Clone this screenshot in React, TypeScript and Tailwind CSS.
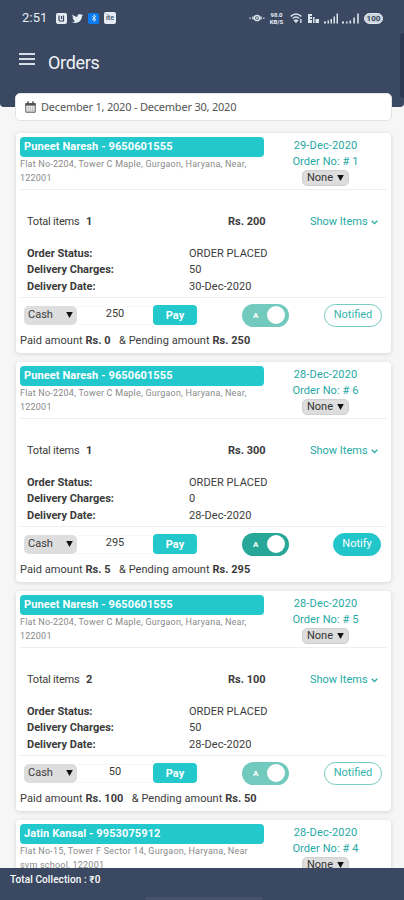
import { FaBluetoothB, FaTwitter } from "react-icons/fa";

const orders = [
  {
    id: 1,
    customer: "Puneet Naresh - 9650601555",
    address: ["Flat No-2204, Tower C Maple, Gurgaon, Haryana, Near,", "122001"],
    date: "29-Dec-2020",
    details: {
      items: 1,
      total: 200,
      charges: 50,
      delivery: "30-Dec-2020",
      due: 250,
      paid: 0,
      notified: true,
    },
  },
  {
    id: 6,
    customer: "Puneet Naresh - 9650601555",
    address: ["Flat No-2204, Tower C Maple, Gurgaon, Haryana, Near,", "122001"],
    date: "28-Dec-2020",
    details: {
      items: 1,
      total: 300,
      charges: 0,
      delivery: "28-Dec-2020",
      due: 295,
      paid: 5,
      notified: false,
    },
  },
  {
    id: 5,
    customer: "Puneet Naresh - 9650601555",
    address: ["Flat No-2204, Tower C Maple, Gurgaon, Haryana, Near,", "122001"],
    date: "28-Dec-2020",
    details: {
      items: 2,
      total: 100,
      charges: 50,
      delivery: "28-Dec-2020",
      due: 50,
      paid: 100,
      notified: true,
    },
  },
  {
    id: 4,
    customer: "Jatin Kansal - 9953075912",
    address: ["Flat No-15, Tower F Sector 14, Gurgaon, Haryana, Near", "svm school, 122001"],
    date: "28-Dec-2020",
    details: null,
  },
];

type Order = (typeof orders)[number];
type Details = NonNullable<Order["details"]>;

function StatusBar() {
  return (
    <div className="flex h-9 items-center pl-[22px] text-[#e6edf5]">
      <span className="w-[34px] text-[13px] tracking-[0.1px]">2:51</span>
      <span className="flex h-[11px] w-[11px] items-center justify-center rounded-[2px] bg-[#e4ebf2]">
        <svg width="9" height="9" viewBox="0 0 9 9" fill="none" stroke="#3a4861" strokeWidth="1.2">
          <path d="M2 1.5v4.2q0 1.3 1.3 1.3h3.2V1.5M4.5 2v3" />
        </svg>
      </span>
      <FaTwitter className="ml-[5px] h-[11px] w-[11px]" />
      <span className="ml-[5px] flex h-[11px] w-[11px] items-center justify-center rounded-[2px] bg-[#087cf0]">
        <FaBluetoothB size={8} />
      </span>
      <span className="ml-[5px] flex h-3 w-[12px] items-center justify-center rounded-[2px] bg-[#e4ebf2] text-[7px] leading-[9px] font-bold text-[#526078]">
        ite
      </span>
      <div className="ml-auto flex items-center pr-[21px]">
        <svg width="16" height="10" viewBox="0 0 16 10" fill="none" stroke="#dbe5ee" strokeWidth="1.5">
          <circle cx="8" cy="5" r="2.6" />
          <path d="M8 4v2M4 3.5v3M12 3.5v3M1.2 4.5v1.2M14.8 4.5v1.2" />
        </svg>
        <span className="ml-[3px] flex w-[17px] flex-col items-center text-[6px] leading-[7px] font-bold">
          <span>98.0</span>
          <span>KB/S</span>
        </span>
        {/* wifi */}
        <svg className="ml-[5px]" width="13" height="11" viewBox="0 0 13 11" fill="none" stroke="#dbe5ee" strokeWidth="1.4">
          <path d="M.7 3.4q5.3-4.6 10.6 0M2.7 5.5q3.3-2.8 6.6 0M4.5 7.5q1.5-1.2 3 0L6 9ZM10.8 6v4" />
        </svg>
        {/* volte */}
        <svg className="ml-[4px]" width="13" height="11" viewBox="0 0 13 11" fill="#dbe5ee">
          <path d="M1 1h4v2H3v1h2v2H3v1h2v3H1ZM6 4h1.5v6H6ZM8.5 6H12v4H8.5Z" />
        </svg>
        {/* sim 1 */}
        <svg className="ml-[4px]" width="15" height="11" viewBox="0 0 15 11" fill="#dbe5ee">
          <path d="M0 8.5h2v2H0ZM3.5 7.5H5v3H3.5ZM6.5 6H8v4.5H6.5ZM9.5 3.5H11v7H9.5ZM12.5.5H14v10h-1.5Z" />
        </svg>
        {/* sim 2 */}
        <svg className="ml-[3px]" width="18" height="11" viewBox="0 0 18 11" fill="#dbe5ee">
          <path d="M0 8.5h2v2H0ZM4 8.5h1.6v2H4ZM7.5 7.5h1.6v3H7.5ZM11.3 4.5h1.6v6h-1.6ZM15.2.5h1.6v10h-1.6Z" />
        </svg>
        <span className="ml-[4px] flex h-[11px] w-[19px] items-center justify-center rounded-full border border-[#e4ebf2] bg-[#cbd3dc] text-[8px] leading-[9px] font-bold text-[#3a4861]">
          100
        </span>
      </div>
    </div>
  );
}

function CalendarIcon() {
  return (
    <svg className="mr-[5px]" width="11" height="12" viewBox="0 0 11 12" fill="none" stroke="#555">
      <path d="M.8 2.5h9.4v8.7H.8Z" />
      <path d="M.5 3.5h10" strokeWidth="2.4" />
      <path d="M3 .3v2.5M8 .3v2.5" strokeWidth="1.5" />
      <path d="M1 7h9M1 9.2h9M3.6 5v6M5.6 5v6M7.7 5v6" stroke="#999" strokeWidth=".5" />
    </svg>
  );
}

function Caret() {
  return (
    <svg width="7" height="6" viewBox="0 0 7 6" fill="#111">
      <path d="M.2 0h6.6L3.5 6Z" />
    </svg>
  );
}

function Detail({ label, value }: { label: string; value: string | number }) {
  return (
    <div className="flex h-[16.3px] items-center">
      <span className="w-[169px] pl-[7px] font-bold">{label}</span>
      <span className="tracking-[0.05px]">{value}</span>
    </div>
  );
}

function OrderBody({ details }: { details: Details }) {
  return (
    <>
      <div className="flex h-[55px] items-center pt-[9px] pl-[7px]">
        <span className="w-[59px] tracking-[-0.2px]">Total items</span>
        <b className="w-[142px]">{details.items}</b>
        <b className="w-[82px]">Rs. {details.total}</b>
        <button className="flex items-center gap-[3px] whitespace-nowrap text-[#26aaa5]">
          Show Items
          <svg width="7" height="5" viewBox="0 0 7 5" fill="none" stroke="currentColor" strokeWidth="1.3">
            <path d="m.7.8 2.8 2.8L6.3.8" />
          </svg>
        </button>
      </div>

      <div className="h-[53px] border-b border-[#eeeeee] pt-px">
        <Detail label="Order Status:" value="ORDER PLACED" />
        <Detail label="Delivery Charges:" value={details.charges} />
        <Detail label="Delivery Date:" value={details.delivery} />
      </div>

      <div className="flex h-[34px] items-center pl-1">
        <button className="flex h-[19px] w-[53px] items-center justify-between rounded-[5px] bg-[#dddddd] px-[4px]">
          Cash <Caret />
        </button>
        <span className="flex h-[19px] w-[76px] items-center justify-center border-y border-[#f6f6f6] pb-[2px]">
          {details.due}
        </span>
        <button className="flex h-[20px] w-[44px] items-center justify-center rounded-[4px] bg-[#22c8cc] pt-[2px] font-bold text-white">
          Pay
        </button>
        <span
          className={
            "ml-[45px] flex h-[23px] w-[47px] items-center justify-between rounded-full pr-[4px] pl-[11px] " +
            (details.notified ? "bg-[#72c9bd]" : "bg-[#27a797]")
          }
        >
          <span className="pt-px text-[8px] font-bold text-white">A</span>
          <span className="h-[18px] w-[18px] rounded-full bg-white" />
        </span>
        <button
          className={
            "ml-auto flex h-[23px] items-center justify-center rounded-full border " +
            (details.notified
              ? "mr-[5px] w-[58px] border-[#73cbc1] bg-white text-[#35b5ad]"
              : "mr-[6px] w-[48px] border-[#22c5ca] bg-[#22c5ca] text-white")
          }
        >
          {details.notified ? "Notified" : "Notify"}
        </button>
      </div>

      <p className="pt-[2px] tracking-[0.05px] whitespace-pre">
        Paid amount <b>Rs. {details.paid}</b>
        {"   & Pending amount "}
        <b>Rs. {details.due}</b>
      </p>
    </>
  );
}

function OrderCard({ order }: { order: Order }) {
  return (
    <article className="mb-[9px] h-[220px] shrink-0 rounded-[4px] bg-white px-1 pt-[4px] text-[11px] leading-[14px] text-[#3b3b3b] shadow-[0_1px_5px_rgba(0,0,0,0.14)]">
      <div className="flex h-[53px] border-b border-[#eeeeee]">
        <div className="w-[244px]">
          <h2 className="flex h-[20px] items-center rounded-[4px] bg-[#22c8cc] pl-1 text-[11px] font-bold tracking-[0.1px] text-white">
            {order.customer}
          </h2>
          <p className="text-[9px] leading-[14px] tracking-[0.22px] whitespace-nowrap text-[#8a8a8a]">
            {order.address[0]}
            <br />
            {order.address[1]}
          </p>
        </div>
        <div className="flex flex-1 flex-col items-center text-[#26a9a5]">
          <span className="h-4 leading-[17px] tracking-[0.15px]">{order.date}</span>
          <span className="h-4 leading-[17px] tracking-[0.1px]">Order No: # {order.id}</span>
          <button className="mt-px flex h-4 w-[47px] items-center justify-between rounded-[5px] border border-[#cfcfcf] bg-[#dddddd] px-[4px] text-[#333]">
            None <Caret />
          </button>
        </div>
      </div>
      {order.details && <OrderBody details={order.details} />}
    </article>
  );
}

export default function App() {
  return (
    <div className="flex h-[900px] w-[404px] flex-col overflow-hidden bg-[#f6f6f6] font-['Roboto',sans-serif]">
      <header className="relative h-[107px] shrink-0 rounded-b-[4px] bg-[#3a4861]">
        <StatusBar />
        <div className="flex h-[52px] items-center pl-[19px]">
          <button className="flex w-[16px] flex-col gap-[3px] pb-[7px]">
            <span className="h-[2px] bg-[#d6dde7]" />
            <span className="h-[2px] bg-[#d6dde7]" />
            <span className="h-[2px] bg-[#d6dde7]" />
          </button>
          <h1 className="ml-[13px] text-[18px] tracking-[-0.3px] text-[#f0f3f7]">Orders</h1>
        </div>
        <span className="absolute top-[33px] right-0 h-[65px] w-1 rounded-l-sm bg-[#2b374e]" />
      </header>

      <main className="relative -mt-[14px] flex min-h-0 flex-1 flex-col overflow-hidden pr-[13px] pl-4">
        <div className="-mr-px -ml-px mb-[12px] flex h-[28px] shrink-0 items-center rounded-[5px] border border-[#e3e3e3] bg-white pl-[9px] text-[11px] text-[#555]">
          <CalendarIcon />
          <span className="font-['Noto_Sans',sans-serif] tracking-[-0.21px]">
            December 1, 2020 - December 30, 2020
          </span>
        </div>
        {orders.map((order) => (
          <OrderCard key={order.id} order={order} />
        ))}
      </main>

      <footer className="flex h-[32px] shrink-0 flex-col justify-between bg-[#3a4861] pt-[5px] pl-[10px] text-[10px] leading-[14px] font-medium tracking-[0.1px] text-white">
        <span>Total Collection : ₹0</span>
        <span className="ml-[136px] h-[3px] w-[116px] bg-[#465269]" />
      </footer>
    </div>
  );
}
